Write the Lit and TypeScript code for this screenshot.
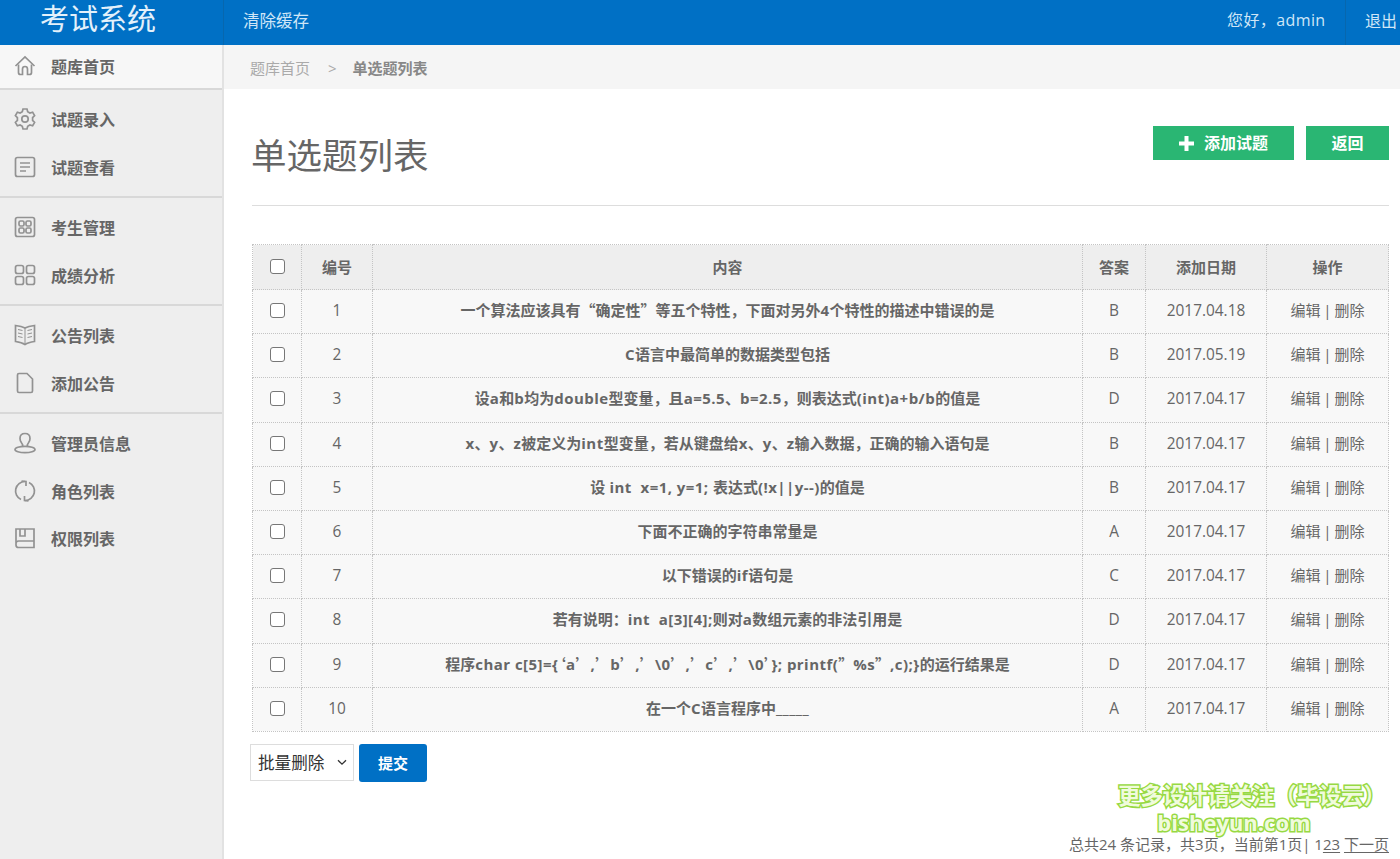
import { LitElement, html, css, svg } from "lit";
import { customElement } from "lit/decorators.js";

const rows: [string, string, string, string][] = [
  ["1", "一个算法应该具有“确定性”等五个特性，下面对另外4个特性的描述中错误的是", "B", "2017.04.18"],
  ["2", "C语言中最简单的数据类型包括", "B", "2017.05.19"],
  ["3", "设a和b均为double型变量，且a=5.5、b=2.5，则表达式(int)a+b/b的值是", "D", "2017.04.17"],
  ["4", "x、y、z被定义为int型变量，若从键盘给x、y、z输入数据，正确的输入语句是", "B", "2017.04.17"],
  ["5", "设 int  x=1, y=1; 表达式(!x||y--)的值是", "B", "2017.04.17"],
  ["6", "下面不正确的字符串常量是", "A", "2017.04.17"],
  ["7", "以下错误的if语句是", "C", "2017.04.17"],
  ["8", "若有说明：int  a[3][4];则对a数组元素的非法引用是", "D", "2017.04.17"],
  ["9", "程序char c[5]={‘a’,’b’,’\\0’,’c’,’\\0’}; printf(”%s”,c);}的运行结果是", "D", "2017.04.17"],
  ["10", "在一个C语言程序中_____", "A", "2017.04.17"],
];

const icons: Record<string, unknown> = {
  home: svg`<path d="M1.500 11 L11 2 L20.500 11"/><path d="M4.500 9.500 V17.500 a2 2 0 0 0 2 2 H8.500 V14 a2.500 2.500 0 0 1 5 0 V19.500 H15.500 a2 2 0 0 0 2 -2 V9.500"/>`,
  gear: svg`<g transform="translate(0,-1)"><path d="M9 2 h4 l.7 2.800 2.200 1.200 2.700-.8 2 3.500-2 2 v2.600 l2 2-2 3.500-2.700-.8-2.200 1.200-.7 2.800 h-4 l-.7-2.800-2.200-1.200-2.700.8-2-3.500 2-2 V10.700 l-2-2 2-3.500 2.700.8 2.200-1.200z"/><circle cx="11" cy="12" r="3.200"/></g>`,
  doc: svg`<rect x="1.500" y="1.500" width="19" height="19" rx="2"/><path d="M6 7h10M6 11h10M6 15h6"/>`,
  grid: svg`<rect x="1.500" y="1.500" width="19" height="19" rx="2"/><rect x="5" y="5" width="5" height="5" rx="1.500"/><rect x="12" y="5" width="5" height="5" rx="1.500"/><rect x="5" y="12" width="5" height="5" rx="1.500"/><rect x="12" y="12" width="5" height="5" rx="1.500"/>`,
  apps: svg`<rect x="1.500" y="1.500" width="8" height="8" rx="2"/><rect x="12.500" y="1.500" width="8" height="8" rx="2"/><rect x="1.500" y="12.500" width="8" height="8" rx="2"/><rect x="12.500" y="12.500" width="8" height="8" rx="2"/>`,
  book: svg`<path d="M11 4 C8 2.500 5 2 1.500 1.500 V17.500 C5 18 8 18.500 11 20.500 C14 18.500 17 18 20.500 17.500 V1.500 C17 2 14 2.500 11 4z"/><path d="M11 4V20.500M4 5.500l4.500 1M4 9l4.500 1M4 12.500l4.500 1M18 5.500l-4.500 1M18 9l-4.500 1M18 12.500l-4.500 1" stroke-width="1"/>`,
  page: svg`<path d="M3.500 3 a1.500 1.500 0 0 1 1.500-1.500 H13 L18.500 7 V19 a1.500 1.500 0 0 1-1.500 1.500 H5 A1.500 1.500 0 0 1 3.500 19z"/>`,
  user: svg`<path d="M8.500 14.500 C9 13 8.500 12 7.500 10.800 C6.500 9.500 6 8 6 6.500 C6 3.500 8 1.500 11 1.500 C14 1.500 16 3.500 16 6.500 C16 8 15.500 9.500 14.500 10.800 C13.500 12 13 13 13.500 14.500"/><ellipse cx="11" cy="17.500" rx="10" ry="3.200"/>`,
  refresh: svg`<path d="M7 19.600 A9.500 9.500 0 0 1 11 1.500"/><path d="M15 2.400 A9.500 9.500 0 0 1 11 20.500"/><path d="M7.500 1 L12 1.500 L12 6"/><path d="M14.500 21 L10.500 20.500 L10.500 16"/>`,
  notebook: svg`<path d="M2 16 V2 H20 V20.500 H4.500 a2.500 2.500 0 0 1-2.500-2.500 V16.500 a2.500 2.500 0 0 1 2.500-2.500 H20"/><path d="M6 2 V9 H11 V2"/>`,
};

const groups: [string, string][][] = [
  [["gear", "试题录入"], ["doc", "试题查看"]],
  [["grid", "考生管理"], ["apps", "成绩分析"]],
  [["book", "公告列表"], ["page", "添加公告"]],
  [["user", "管理员信息"], ["refresh", "角色列表"], ["notebook", "权限列表"]],
];

const icon = (n: string) => html`<svg class="ic" viewBox="0 0 22 22">${icons[n]}</svg>`;

/* Question text mixes three kinds of run: CJK-width quotes, latin, and CJK. */
const runs = (text: string) =>
  (text.match(/[‘’“”]|[\x20-\x7e]+|[^\x20-\x7e‘’“”]+/g) || []).map((part) => {
    if (/^[‘’“”]$/.test(part)) return html`<span class="q">${part}</span>`;
    if (/^[\x20-\x7e]+$/.test(part)) return html`<span class="l">${part}</span>`;
    return part;
  });

@customElement("app-root")
export class AppRoot extends LitElement {
  static styles = css`
    :host {
      display: block;
      position: relative;
      width: 1400px;
      height: 859px;
      overflow: hidden;
      background: #fff;
      color: #666;
      font-family: "Open Sans", "Noto Sans CJK SC", sans-serif;
      font-size: 15px;
    }
    .top {
      height: 45px;
      background: #0070c5;
      color: #cfe6f7;
      display: flex;
      align-items: stretch;
      font-size: 16px;
    }
    .logo {
      width: 224px;
      box-sizing: border-box;
      padding-left: 40px;
      font-size: 29px;
      line-height: 38px;
      color: #e3f1fb;
      border-right: 1px solid #0767ae;
    }
    .clear {
      padding-left: 19px;
      line-height: 42px;
      flex: 1;
      font-size: 16.5px;
    }
    .hello {
      width: 118px;
      line-height: 40px;
      letter-spacing: 0.4px;
      border-right: 1px solid #0767ae;
    }
    .out {
      padding-left: 19px;
      width: 35px;
      line-height: 42px;
      white-space: nowrap;
    }
    .body {
      display: flex;
      height: 814px;
    }
    .side {
      width: 224px;
      flex: none;
      box-sizing: border-box;
      background: #eee;
      border-right: 2px solid #e2e2e2;
      font-weight: 700;
      font-size: 16px;
      color: #666;
    }
    .item {
      display: flex;
      align-items: center;
      height: 47.5px;
      padding-left: 14px;
      gap: 15px;
    }
    .home {
      height: 41px;
      padding-bottom: 2px;
      background: #f7f7f7;
      border-bottom: 2px solid #d8d8d8;
    }
    .group {
      padding: 5.5px 0 5.5px;
      border-bottom: 2px solid #d8d8d8;
    }
    .group:first-of-type {
      padding: 6px 0 4px;
    }
    .group:last-child {
      border-bottom: 0;
    }
    .ic {
      width: 22px;
      height: 22px;
      fill: none;
      stroke: #929292;
      stroke-width: 1.7;
      flex: none;
    }
    .main {
      flex: 1;
      min-width: 0;
    }
    .crumb {
      height: 44px;
      box-sizing: border-box;
      padding: 2px 0 0 26px;
      background: #f5f5f5;
      color: #aaa;
      display: flex;
      align-items: center;
      gap: 18px;
      line-height: 1;
    }
    .crumb b {
      color: #888;
      margin-left: -2px;
    }
    .content {
      padding: 0 11px 0 28px;
    }
    .head {
      display: flex;
      justify-content: space-between;
      align-items: flex-start;
      height: 116px;
      border-bottom: 1px solid #ddd;
      margin-bottom: 38px;
    }
    h1 {
      margin: 36px 0 0 -1px;
      font-size: 35.5px;
      font-weight: 400;
      line-height: 60px;
      color: #666;
    }
    .btns {
      display: flex;
      gap: 12px;
      margin-top: 37px;
      font-size: 16px;
    }
    .btn {
      height: 34px;
      background: #2ab673;
      color: #fff;
      font-weight: 700;
      display: flex;
      align-items: center;
      justify-content: center;
      gap: 10px;
      line-height: 1;
    }
    .add { width: 141px; }
    .back { width: 83px; }
    .plus { width: 15px; height: 15px; fill: #fff; }
    table {
      border-collapse: collapse;
      table-layout: fixed;
      width: 1136px;
      text-align: center;
    }
    th, td {
      border: 1px dotted #c4c4c4;
      padding: 0 0 2px;
      box-sizing: content-box;
    }
    th {
      height: 42px;
      background: #eee;
      font-weight: 700;
    }
    td {
      height: 41.2px;
      background: #f8f8f8;
      font-size: 15.4px;
    }
    td.txt {
      padding-bottom: 4px;
      height: 39.2px;
      font-size: 15px;
      font-weight: 700;
      white-space: pre;
    }
    .q {
      font-family: "Noto Sans CJK SC", sans-serif;
    }
    .l {
      letter-spacing: 0.45px;
    }
    .check {
      display: block;
      width: 15px;
      height: 15px;
      margin: 0 auto;
      box-sizing: border-box;
      border: 1.5px solid #777;
      border-radius: 3px;
      background: #fff;
    }
    td.ops {
      padding-bottom: 4px;
      height: 39.2px;
      font-size: 15px;
      word-spacing: -1px;
    }
    .batch {
      display: flex;
      gap: 5px;
      margin: 12px 0 0 -2px;
      align-items: flex-start;
    }
    .select {
      width: 104px;
      height: 37px;
      box-sizing: border-box;
      border: 1px solid #ddd;
      background: #fff;
      color: #333;
      font-size: 16.6px;
      display: flex;
      align-items: center;
      justify-content: space-between;
      padding: 0 6px 0 7px;
    }
    .chev {
      width: 10px;
      height: 7px;
      fill: none;
      stroke: #333;
      stroke-width: 1.3;
    }
    .submit {
      width: 68px;
      height: 38px;
      background: #0070c5;
      color: #fff;
      font-size: 15px;
      font-weight: 700;
      border-radius: 3px;
      display: flex;
      align-items: center;
      justify-content: center;
    }
    .pager {
      margin-top: 51px;
      text-align: right;
      line-height: 22px;
      color: #666;
    }
    .pager u { text-underline-offset: 2px; }
    .mark {
      position: absolute;
      left: 1107px;
      top: 781px;
      width: 290px;
      text-align: center;
      font-weight: 700;
      color: #f0fbdc;
      -webkit-text-stroke: 3px #97d943;
      paint-order: stroke fill;
      pointer-events: none;
    }
    .mark div:first-child {
      font-size: 22.3px;
      line-height: 30px;
    }
    .mark div:last-child {
      font-size: 22px;
      line-height: 22px;
      margin-left: -36px;
    }
  `;

  render() {
    return html`
      <div class="top">
        <div class="logo">考试系统</div>
        <div class="clear">清除缓存</div>
        <div class="hello">您好，admin</div>
        <div class="out">退出</div>
      </div>
      <div class="body">
        <div class="side">
          <div class="item home">${icon("home")}<span>题库首页</span></div>
          ${groups.map(
            (g) => html`<div class="group">
              ${g.map(([i, t]) => html`<div class="item">${icon(i)}<span>${t}</span></div>`)}
            </div>`
          )}
        </div>
        <div class="main">
          <div class="crumb"><span>题库首页</span><span>&gt;</span><b>单选题列表</b></div>
          <div class="content">
            <div class="head">
              <h1>单选题列表</h1>
              <div class="btns">
                <div class="btn add">
                  <svg class="plus" viewBox="0 0 15 15"><path d="M5.500 0h4v5.500H15v4H9.500V15h-4V9.500H0v-4h5.500z"/></svg>
                  <span>添加试题</span>
                </div>
                <div class="btn back">返回</div>
              </div>
            </div>
            <table>
              <colgroup>
                <col style="width:49px" /><col style="width:71px" /><col style="width:710px" />
                <col style="width:63px" /><col style="width:121px" /><col style="width:122px" />
              </colgroup>
              <thead>
                <tr>
                  <th><span class="check"></span></th>
                  <th>编号</th><th>内容</th><th>答案</th><th>添加日期</th><th>操作</th>
                </tr>
              </thead>
              <tbody>
                ${rows.map(
                  (r) => html`<tr>
                    <td><span class="check"></span></td>
                    <td>${r[0]}</td>
                    <td class="txt">${runs(r[1])}</td>
                    <td>${r[2]}</td>
                    <td>${r[3]}</td>
                    <td class="ops">编辑 | 删除</td>
                  </tr>`
                )}
              </tbody>
            </table>
            <div class="batch">
              <div class="select">
                <span>批量删除</span>
                <svg class="chev" viewBox="0 0 10 7"><path d="M1 1.200l4 4 4-4"/></svg>
              </div>
              <div class="submit">提交</div>
            </div>
            <div class="pager">总共24 条记录，共3页，当前第1页| 1<u>23</u> <u>下一页</u></div>
          </div>
        </div>
      </div>
      <div class="mark"><div>更多设计请关注（毕设云）</div><div>bisheyun.com</div></div>
    `;
  }
}
